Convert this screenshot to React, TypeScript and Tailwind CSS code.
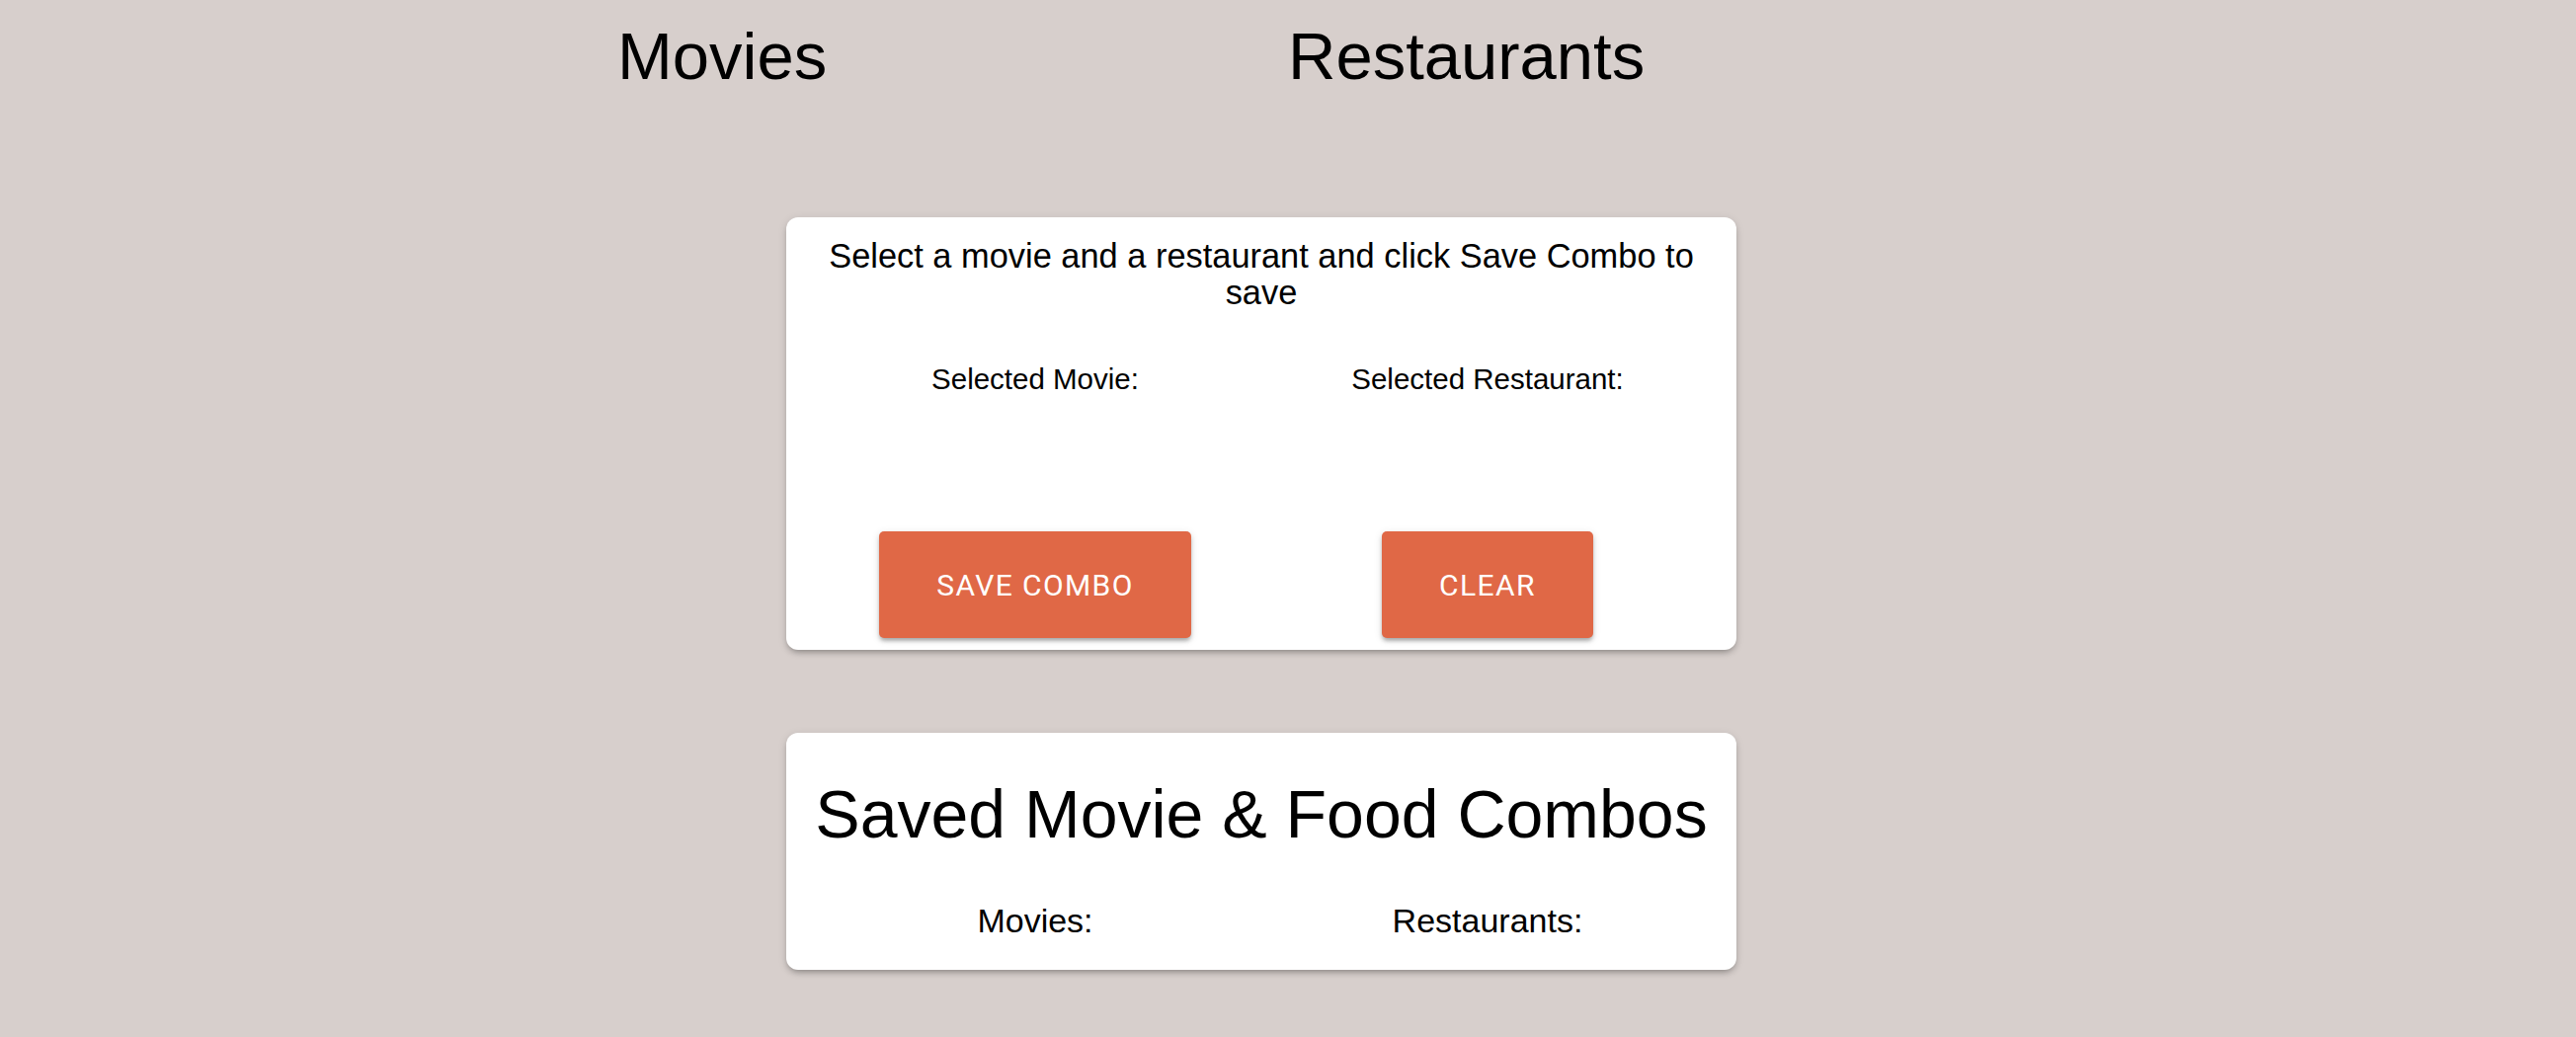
const SelectionCard = () => {
  return (
    <div className="ml-[796px] w-[962px] rounded-[12px] bg-white px-[23px] pt-[21px] pb-[12px] shadow-[0_4px_6px_-2px_rgba(0,0,0,0.3),0_2px_10px_rgba(0,0,0,0.1)]">
      <p className="text-center text-[34.4px] leading-[37px] text-black">
        Select a movie and a restaurant and click Save Combo to save
      </p>
      <div className="mt-[50px] grid grid-cols-2">
        <div className="flex flex-col items-center">
          <p className="text-[29.5px] leading-[38px] text-black">Selected Movie:</p>
          <div className="h-[135px]" />
          <button className="h-[108px] rounded-[5px] bg-[#e06846] px-[58px] font-['Roboto',sans-serif] text-[30px] font-normal tracking-[1.4px] text-white shadow-[0_4px_4px_-2px_rgba(0,0,0,0.2),0_3px_4px_rgba(0,0,0,0.14),0_2px_8px_rgba(0,0,0,0.12)]">
            SAVE COMBO
          </button>
        </div>
        <div className="flex flex-col items-center">
          <p className="text-[29.5px] leading-[38px] text-black">Selected Restaurant:</p>
          <div className="h-[135px]" />
          <button className="h-[108px] rounded-[5px] bg-[#e06846] px-[58px] font-['Roboto',sans-serif] text-[30px] font-normal tracking-[1.4px] text-white shadow-[0_4px_4px_-2px_rgba(0,0,0,0.2),0_3px_4px_rgba(0,0,0,0.14),0_2px_8px_rgba(0,0,0,0.12)]">
            CLEAR
          </button>
        </div>
      </div>
    </div>
  );
};

const SavedCombos = () => {
  return (
    <div className="ml-[796px] mt-[84px] w-[962px] rounded-[12px] bg-white px-[23px] pt-[43px] pb-[30px] shadow-[0_4px_6px_-2px_rgba(0,0,0,0.3),0_2px_10px_rgba(0,0,0,0.1)]">
      <h1 className="text-center text-[68px] leading-[78px] text-black">Saved Movie &amp; Food Combos</h1>
      <div className="mt-[50px] grid grid-cols-2">
        <p className="text-center text-[34px] leading-[39px] text-black">Movies:</p>
        <p className="text-center text-[34px] leading-[39px] text-black">Restaurants:</p>
      </div>
    </div>
  );
};

const App = () => {
  return (
    <div className="min-h-[1050px] bg-[#d7cfcc] font-['Liberation_Sans',Arial,sans-serif]">
      {/* Column headings */}
      <div className="grid grid-cols-2 pt-[18px]">
        <h1 className="pl-[625px] text-[67px] leading-[77px] text-black">Movies</h1>
        <h1 className="text-[67px] leading-[77px] text-black">Restaurants</h1>
      </div>

      <div className="mt-[125px]">
        <SelectionCard />
        <SavedCombos />
      </div>
    </div>
  );
};

export default App;
